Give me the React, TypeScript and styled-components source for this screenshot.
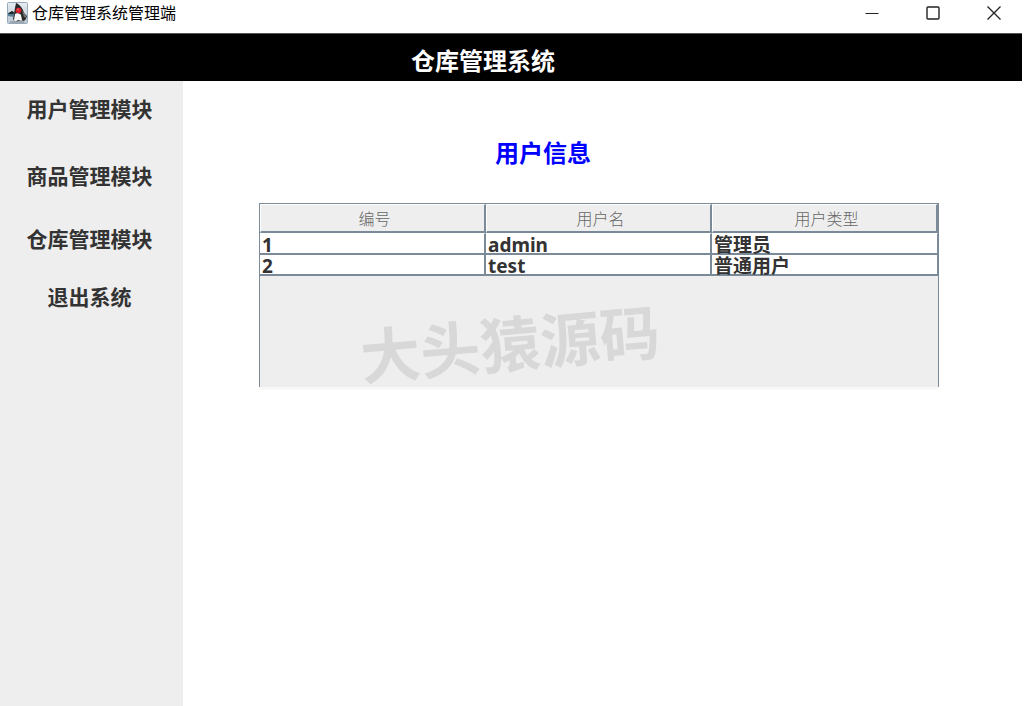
import React from "react";
import styled, { createGlobalStyle } from "styled-components";

const line = "#7a8a99";
const panel = "#eeeeee";

const GlobalStyle = createGlobalStyle`
  * { box-sizing: border-box; }
  body {
    margin: 0;
    background: #fff;
    color: #333;
    font-family: "Noto Sans", "Noto Sans CJK SC", sans-serif;
  }
  button { font-family: inherit; color: inherit; background: none; border: 0; padding: 0; }
`;

const Frame = styled.div`
  min-height: 100vh;
  display: flex;
  flex-direction: column;
`;

const TitleBar = styled.header`
  height: 33px;
  padding: 0 0 7px 7px;
  display: flex;
  align-items: center;
  color: #000;
`;

const WindowTitle = styled.span`
  flex: 1;
  padding: 0 0 1px 4px;
  font-size: 16px;
  line-height: 24px;
`;

const WindowButton = styled.button`
  width: 61px;
  height: 26px;
  display: flex;
  align-items: center;
  justify-content: center;
`;

const Banner = styled.div`
  height: 48px;
  margin-right: 2px;
  padding: 9px 56px 0 0;
  background: #000;
  border-top: 1px solid #555;
  color: #fff;
  text-align: center;
`;

const BannerTitle = styled.h1`
  margin: 0;
  font-size: 24px;
  line-height: 36px;
`;

const Body = styled.div`
  flex: 1;
  display: flex;
`;

const Sidebar = styled.nav`
  width: 183px;
  padding-right: 4px;
  background: ${panel};
  display: grid;
  grid-template-rows: 58px 76px 50px 66px;
  justify-items: center;
  align-items: center;
`;

const NavButton = styled.button`
  padding-bottom: 2px;
  font-size: 21px;
  line-height: 30px;
  font-weight: 700;
`;

const Main = styled.main`
  flex: 1;
  padding: 54px 85px 0 76px;
`;

const Heading = styled.h2`
  margin: 0 0 32px;
  padding-right: 112px;
  color: #00f;
  font-size: 24px;
  line-height: 36px;
  text-align: center;
`;

const TablePane = styled.section`
  position: relative;
  height: 184px;
  background: ${panel};
  border: 1px solid ${line};
  border-bottom: 0;
  box-shadow: 0 3px 0 #f8f8f8;
`;

const Table = styled.table`
  width: 100%;
  table-layout: fixed;
  border-collapse: separate;
  border-spacing: 0;
`;

const HeadCell = styled.th`
  height: 29px;
  padding: 0 0 0 4px;
  border: solid;
  border-width: 1px 2px 2px 1px;
  border-color: #fff ${line} ${line} #fff;
  color: #666;
  font-family: "Noto Sans CJK SC", sans-serif;
  font-size: 16px;
  line-height: 24px;
  font-weight: 300;
  text-align: center;
`;

const Cell = styled.td`
  padding: 0 0 0 2px;
  background: #fff;
  border-right: 2px solid ${line};
  border-bottom: 2px solid ${line};
  font-size: 19px;
  font-weight: 700;
  white-space: nowrap;
  tr:first-child > & { border-top: 1px solid #fff; }
  &:last-child { border-right-width: 1px; }
`;

const CellText = styled.div`
  height: 19px;
  line-height: 22px;
`;

const Watermark = styled.div`
  position: absolute;
  left: 100px;
  top: 104px;
  color: #d8d8d8;
  font-size: 60px;
  line-height: 72px;
  font-weight: 700;
  white-space: nowrap;
  transform: rotate(-5deg);
  pointer-events: none;
`;

const navItems = ["用户管理模块", "商品管理模块", "仓库管理模块", "退出系统"];
const columns = ["编号", "用户名", "用户类型"];
const users = [
  ["1", "admin", "管理员"],
  ["2", "test", "普通用户"],
];

function DukeIcon() {
  return (
    <svg width="21" height="22" viewBox="0 0 21 22" aria-hidden="true">
      <defs>
        <linearGradient id="tile" x1="0" y1="0" x2="0" y2="1">
          <stop offset="0" stopColor="#e6ecf2" />
          <stop offset="1" stopColor="#b9c6d2" />
        </linearGradient>
      </defs>
      <rect x="0.5" y="0.5" width="20" height="21" rx="1" fill="url(#tile)" stroke="#98a9b9" />
      <path d="M1 11L5 9L8 12L6 15L1 14Z" fill="#568099" />
      <path d="M1 12L5 9L8 11L5 12Z" fill="#222" />
      <path d="M9 1C12 2 16 6 17 11L20 14L19 17L17 19L14 18L8 20L6 17L7 12L8 6Z" fill="#292929" />
      <path d="M8 12C9 11 13 11 14 13L15 18L11 18L8 20L7 18Z" fill="#f8f8f8" />
      <path d="M15 9L18 12L20 16L17 15Z" fill="#777" />
      <path d="M3 20H17" stroke="#7c8790" />
      <circle cx="11.5" cy="8.5" r="2.8" fill="#d9202c" />
      <circle cx="11" cy="7.5" r="1" fill="#f35b61" />
    </svg>
  );
}

export default function App() {
  return (
    <Frame>
      <GlobalStyle />
      <TitleBar>
        <DukeIcon />
        <WindowTitle>仓库管理系统管理端</WindowTitle>
        <WindowButton aria-label="最小化">
          <svg width="14" height="14" viewBox="0 0 14 14" stroke="#222" fill="none">
            <path d="M0.5 7.5H13.5" />
          </svg>
        </WindowButton>
        <WindowButton aria-label="最大化">
          <svg width="14" height="14" viewBox="0 0 14 14" stroke="#222" strokeWidth="1.4" fill="none">
            <rect x="1" y="1" width="12" height="12" rx="1" />
          </svg>
        </WindowButton>
        <WindowButton aria-label="关闭">
          <svg width="14" height="14" viewBox="0 0 14 14" stroke="#222" strokeWidth="1.3" fill="none">
            <path d="M0.5 0.5L13.5 13.5M13.5 0.5L0.5 13.5" />
          </svg>
        </WindowButton>
      </TitleBar>
      <Banner>
        <BannerTitle>仓库管理系统</BannerTitle>
      </Banner>
      <Body>
        <Sidebar>
          {navItems.map((item) => (
            <NavButton key={item}>{item}</NavButton>
          ))}
        </Sidebar>
        <Main>
          <Heading>用户信息</Heading>
          <TablePane>
            <Table>
              <thead>
                <tr>
                  {columns.map((name) => (
                    <HeadCell key={name} scope="col">{name}</HeadCell>
                  ))}
                </tr>
              </thead>
              <tbody>
                {users.map((user) => (
                  <tr key={user[0]}>
                    {user.map((value) => (
                      <Cell key={value}>
                        <CellText>{value}</CellText>
                      </Cell>
                    ))}
                  </tr>
                ))}
              </tbody>
            </Table>
            <Watermark>大头猿源码</Watermark>
          </TablePane>
        </Main>
      </Body>
    </Frame>
  );
}
